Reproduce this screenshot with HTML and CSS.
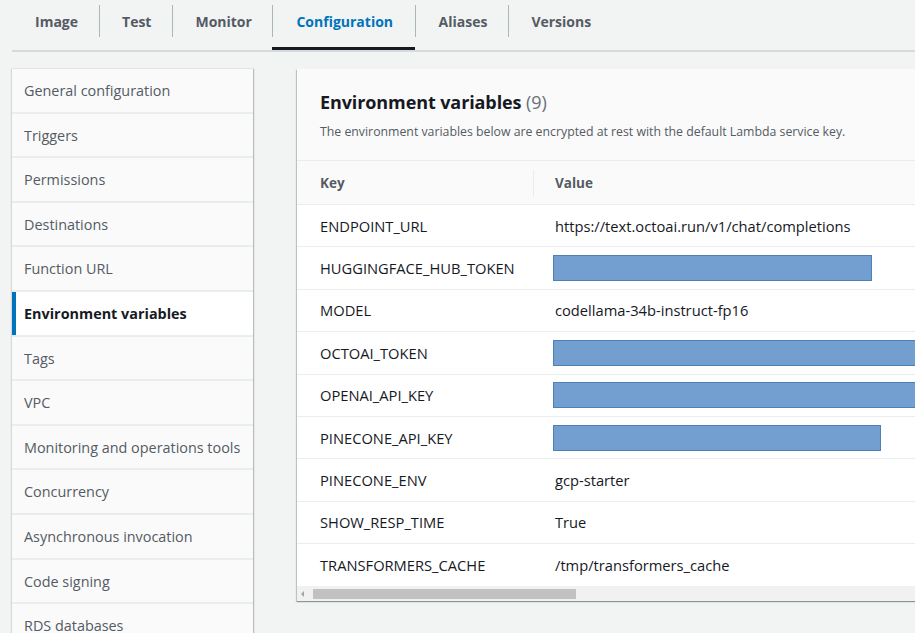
FILE: index.html
```html
<!DOCTYPE html>
<html lang="en">
<head>
<meta charset="utf-8">
<title>Configuration - Environment variables</title>
<link rel="stylesheet" href="styles.css">
</head>
<body>
<nav class="tabs">
  <div class="tab first">Image</div>
  <div class="tab">Test</div>
  <div class="tab">Monitor</div>
  <div class="tab active">Configuration</div>
  <div class="tab">Aliases</div>
  <div class="tab last">Versions</div>
</nav>
<div class="main">
  <ul class="side">
    <li>General configuration</li>
    <li>Triggers</li>
    <li>Permissions</li>
    <li>Destinations</li>
    <li>Function URL</li>
    <li class="on">Environment variables</li>
    <li>Tags</li>
    <li>VPC</li>
    <li>Monitoring and operations tools</li>
    <li>Concurrency</li>
    <li>Asynchronous invocation</li>
    <li>Code signing</li>
    <li>RDS databases</li>
  </ul>
  <section class="panel">
    <header class="phead">
      <h2>Environment variables <span class="count">(9)</span></h2>
      <p>The environment variables below are encrypted at rest with the default Lambda service key.</p>
    </header>
    <div class="thead">
      <div class="kcol">Key</div>
      <div class="vcol sep">Value</div>
    </div>
    <div class="row"><div class="kcol">ENDPOINT_URL</div><div class="vcol">https://text.octoai.run/v1/chat/completions</div></div>
    <div class="row"><div class="kcol">HUGGINGFACE_HUB_TOKEN</div><div class="vcol"><span class="redact" style="width:319px"></span></div></div>
    <div class="row"><div class="kcol">MODEL</div><div class="vcol">codellama-34b-instruct-fp16</div></div>
    <div class="row"><div class="kcol">OCTOAI_TOKEN</div><div class="vcol"><span class="redact" style="width:420px"></span></div></div>
    <div class="row"><div class="kcol">OPENAI_API_KEY</div><div class="vcol"><span class="redact" style="width:420px"></span></div></div>
    <div class="row"><div class="kcol">PINECONE_API_KEY</div><div class="vcol"><span class="redact" style="width:328px"></span></div></div>
    <div class="row"><div class="kcol">PINECONE_ENV</div><div class="vcol">gcp-starter</div></div>
    <div class="row"><div class="kcol">SHOW_RESP_TIME</div><div class="vcol">True</div></div>
    <div class="row last"><div class="kcol">TRANSFORMERS_CACHE</div><div class="vcol">/tmp/transformers_cache</div></div>
    <div class="hscroll">
      <span class="arrow"></span>
      <span class="thumb"></span>
    </div>
  </section>
</div>
</body>
</html>
```
FILE: styles.css
```css
html, body {
  margin: 0;
  padding: 0;
}
body {
  background: #f2f3f3;
  font-family: "Open Sans", "Noto Sans", "Liberation Sans", sans-serif;
  color: #16191f;
  overflow: hidden;
  width: 915px;
  height: 633px;
}
.tabs {
  display: flex;
  margin-left: 12px;
  width: 903px;
  height: 50px;
  border-bottom: 2px solid #d5dbdb;
  box-sizing: content-box;
  align-items: flex-start;
}
.tab {
  position: relative;
  font-size: 14px;
  font-weight: 700;
  color: #545b64;
  padding: 0 21.5px 0 22.5px;
  height: 50px;
  line-height: 43px;
  box-sizing: border-box;
}
.tab.first {
  padding-left: 23px;
}
.tab::after {
  content: "";
  position: absolute;
  right: 0;
  top: 5px;
  width: 1px;
  height: 32px;
  background: #aab7b8;
}
.tab.last::after,
.tab.active::after {
  display: none;
}
.tab.active {
  color: #0073bb;
  border-bottom: 3px solid #16191f;
  margin-left: -1px;
  padding-left: 24px;
  padding-right: 22px;
}
.tab.active + .tab {
  border-left: 1px solid transparent;
}
.tab.active + .tab::before {
  content: "";
  position: absolute;
  left: -1px;
  top: 5px;
  width: 1px;
  height: 32px;
  background: #aab7b8;
}
.main {
  display: flex;
  align-items: flex-start;
  padding: 17px 0 0 12px;
  gap: 44px;
}
.side {
  list-style: none;
  margin: 0;
  padding: 0;
  width: 241px;
  flex: none;
  background: #eaeded;
  box-shadow: 1px 0 1px 0 rgba(0, 28, 36, 0.25), -1px 0 1px 0 rgba(0, 28, 36, 0.12);
}
.side li {
  background: #fafafa;
  height: 42.6px;
  line-height: 44px;
  padding-left: 12px;
  margin-bottom: 2px;
  font-size: 14.4px;
  color: #545b64;
  white-space: nowrap;
}
.side li.on {
  background: #ffffff;
  font-weight: 700;
  color: #16191f;
  border-left: 4px solid #0073bb;
  padding-left: 8px;
}
.panel {
  width: 700px;
  flex: none;
  background: #ffffff;
  box-shadow: 0 1px 1px 0 rgba(0, 28, 36, 0.3), -1px 1px 1px 0 rgba(0, 28, 36, 0.18);
}
.phead {
  background: #fafafa;
  padding: 20px 23px 0;
  height: 92px;
  box-sizing: border-box;
  border-bottom: 1px solid #eaeded;
}
.phead h2 {
  margin: 0;
  font-size: 18px;
  font-weight: 700;
  line-height: 26px;
  letter-spacing: -0.1px;
  color: #16191f;
}
.phead .count {
  font-weight: 400;
  color: #687078;
}
.phead p {
  margin: 9px 0 0;
  font-size: 12.3px;
  line-height: 16px;
  color: #545b64;
}
.thead, .row {
  display: flex;
  align-items: center;
}
.thead {
  background: #fafafa;
  height: 43px;
  border-bottom: 1px solid #eaeded;
  font-weight: 700;
  font-size: 13.5px;
  color: #545b64;
}
.row {
  height: 41.4px;
  border-bottom: 1px solid #eaeded;
  font-size: 14.7px;
  color: #16191f;
}
.row.last {
  border-bottom: none;
  height: 42px;
}
.kcol {
  width: 236px;
  flex: none;
  padding-left: 23px;
  box-sizing: border-box;
  white-space: nowrap;
}
.vcol {
  flex: 1;
  padding-left: 22px;
  white-space: nowrap;
  position: relative;
  display: flex;
  align-items: center;
}
.vcol.sep::before {
  content: "";
  position: absolute;
  left: 0;
  top: -4px;
  height: 27px;
  width: 1px;
  background: #eaeded;
}
.redact {
  display: block;
  margin-left: -2px;
  height: 26px;
  background: #729fcf;
  border: 1px solid #4f7fb8;
  box-sizing: border-box;
}
.hscroll {
  display: flex;
  align-items: center;
  height: 15px;
  background: #f1f1f1;
  padding-left: 4px;
}
.arrow {
  width: 0;
  height: 0;
  border-top: 3px solid transparent;
  border-bottom: 3px solid transparent;
  border-right: 3px solid #a3a3a3;
  margin-right: 9px;
}
.thumb {
  width: 263px;
  height: 10px;
  background: #c1c1c1;
}
```
